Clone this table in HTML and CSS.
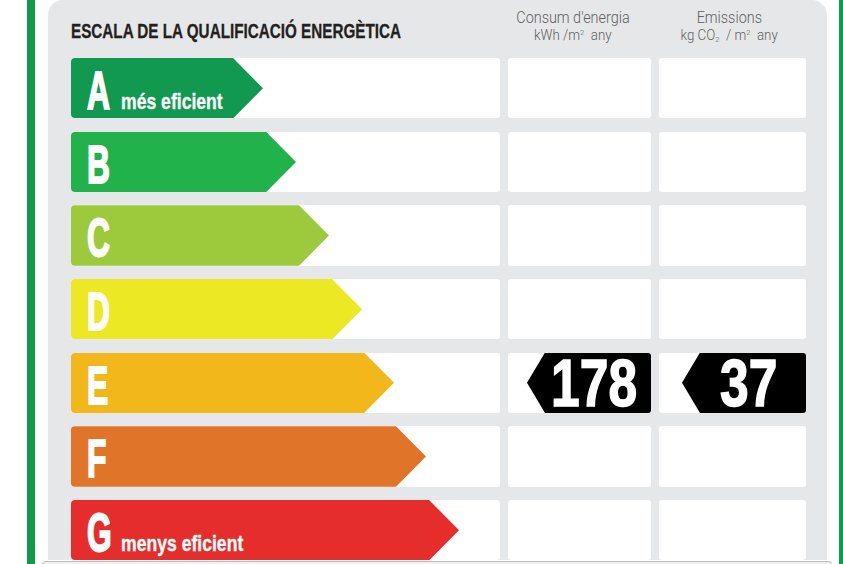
FILE: index.html
```html
<!DOCTYPE html>
<html lang="ca">
<head>
<meta charset="utf-8">
<title>Escala de la qualificació energètica</title>
<link rel="stylesheet" href="styles.css">
</head>
<body>
<div class="frame">
  <div class="panel">
    <div class="title"><span class="title-text">ESCALA DE LA QUALIFICACIÓ ENERGÈTICA</span></div>
    <div class="colhead colhead-energy">
      <div class="ch-main"><span class="narrow">Consum d'energia</span></div>
      <div class="ch-unit"><span class="narrow-unit">kWh /m<sup>2</sup>&nbsp; any</span></div>
    </div>
    <div class="colhead colhead-emis">
      <div class="ch-main"><span class="narrow">Emissions</span></div>
      <div class="ch-unit"><span class="narrow-unit">kg CO<sub>2</sub>&nbsp; / m<sup>2</sup>&nbsp; any</span></div>
    </div>

    <div class="cell"><div class="bar bar-a"><span class="letter">A</span><span class="note">més eficient</span></div></div>
    <div class="cell"></div>
    <div class="cell"></div>

    <div class="cell"><div class="bar bar-b"><span class="letter">B</span></div></div>
    <div class="cell"></div>
    <div class="cell"></div>

    <div class="cell"><div class="bar bar-c"><span class="letter">C</span></div></div>
    <div class="cell"></div>
    <div class="cell"></div>

    <div class="cell"><div class="bar bar-d"><span class="letter">D</span></div></div>
    <div class="cell"></div>
    <div class="cell"></div>

    <div class="cell"><div class="bar bar-e"><span class="letter">E</span></div></div>
    <div class="cell cell-value"><div class="badge"><span class="num">178</span></div></div>
    <div class="cell cell-value"><div class="badge"><span class="num">37</span></div></div>

    <div class="cell"><div class="bar bar-f"><span class="letter">F</span></div></div>
    <div class="cell"></div>
    <div class="cell"></div>

    <div class="cell"><div class="bar bar-g"><span class="letter">G</span><span class="note">menys eficient</span></div></div>
    <div class="cell"></div>
    <div class="cell"></div>
  </div>
  <div class="footer-box"></div>
</div>
</body>
</html>
```
FILE: styles.css
```css
html, body {
  margin: 0;
  padding: 0;
  background: #ffffff;
  overflow: hidden;
}

body {
  font-family: "Liberation Sans", Arial, sans-serif;
}

.frame {
  margin-left: 27px;
  width: 804px;
  min-height: 600px;
  border-left: 8px solid #129a4c;
  border-right: 8px solid #129a4c;
}

.panel {
  margin-left: 13px;
  width: 779px;
  box-sizing: border-box;
  padding: 0 21px 0 23px;
  background: #e6e7e8;
  border-radius: 15px 15px 0 0;
  display: grid;
  grid-template-columns: 429px 143px 147px;
  column-gap: 8px;
  grid-template-rows: 44.83px repeat(7, 60.5px);
  row-gap: 13.17px;
}

.title {
  padding-top: 20px;
  white-space: nowrap;
}

.title-text {
  display: inline-block;
  font-size: 21px;
  line-height: 21px;
  font-weight: bold;
  color: #231f20;
  -webkit-text-stroke: 0.3px #231f20;
  transform: scaleX(0.726);
  transform-origin: left center;
}

.colhead {
  padding-top: 9.5px;
  text-align: center;
  color: #5e5f61;
  font-family: Roboto, "Liberation Sans", sans-serif;
  font-weight: 300;
  white-space: nowrap;
}

.colhead-energy {
  padding-right: 14px;
}

.colhead-emis {
  padding-right: 6px;
}

.narrow {
  display: inline-block;
  transform: scaleX(0.9);
  transform-origin: center center;
}

.narrow-unit {
  display: inline-block;
  transform: scaleX(0.95);
  transform-origin: center center;
}

.ch-main {
  font-size: 16px;
  line-height: 16px;
}

.ch-unit {
  margin-top: 1px;
  font-size: 14px;
  line-height: 16px;
}

.ch-unit sup,
.ch-unit sub {
  font-size: 8px;
  line-height: 0;
}

.ch-unit sup {
  vertical-align: 5px;
}

.ch-unit sub {
  vertical-align: -2px;
}

.cell {
  background: #ffffff;
  border-radius: 3px;
  display: flex;
}

.cell-value {
  justify-content: flex-end;
}

.bar {
  box-sizing: border-box;
  height: 100%;
  padding: 6px 0 0 16px;
  border-radius: 4px 0 0 4px;
  display: flex;
  align-items: baseline;
  clip-path: polygon(0 0, calc(100% - 30px) 0, 100% 50%, calc(100% - 30px) 100%, 0 100%);
  color: #ffffff;
  font-weight: bold;
  white-space: nowrap;
}

.bar-a { width: 192px; background: #119a4f; }
.bar-b { width: 225px; background: #22b24c; }
.bar-c { width: 258px; background: #9dca3c; }
.bar-d { width: 291px; background: #ece823; }
.bar-e { width: 323px; background: #f2b71b; }
.bar-f { width: 355px; background: #e07529; }
.bar-g { width: 388px; background: #e52e2b; }

.letter {
  display: inline-block;
  width: 25px;
  font-size: 53px;
  line-height: 54px;
  -webkit-text-stroke: 2px #ffffff;
  transform: scaleX(0.6);
  transform-origin: left center;
}

.note {
  display: inline-block;
  margin-left: 9px;
  font-size: 22px;
  line-height: 22px;
  -webkit-text-stroke: 0.3px #ffffff;
  transform: scaleX(0.8);
  transform-origin: left center;
}

.badge {
  box-sizing: border-box;
  width: 124px;
  height: 100%;
  padding-left: 10px;
  background: #000000;
  border-radius: 0 3px 3px 0;
  clip-path: polygon(18px 0, 100% 0, 100% 100%, 18px 100%, 0 50%);
  display: flex;
  justify-content: center;
  color: #ffffff;
  font-weight: bold;
  font-size: 66px;
  line-height: 60px;
}

.num {
  display: inline-block;
  -webkit-text-stroke: 1.5px #ffffff;
  transform: scaleX(0.78);
  transform-origin: center center;
}

.footer-box {
  margin: 0.5px 6px 0 6px;
  height: 40px;
  background: #f1f1f1;
  border: 1px solid #bcbcbc;
  border-radius: 5px 5px 0 0;
}
```
